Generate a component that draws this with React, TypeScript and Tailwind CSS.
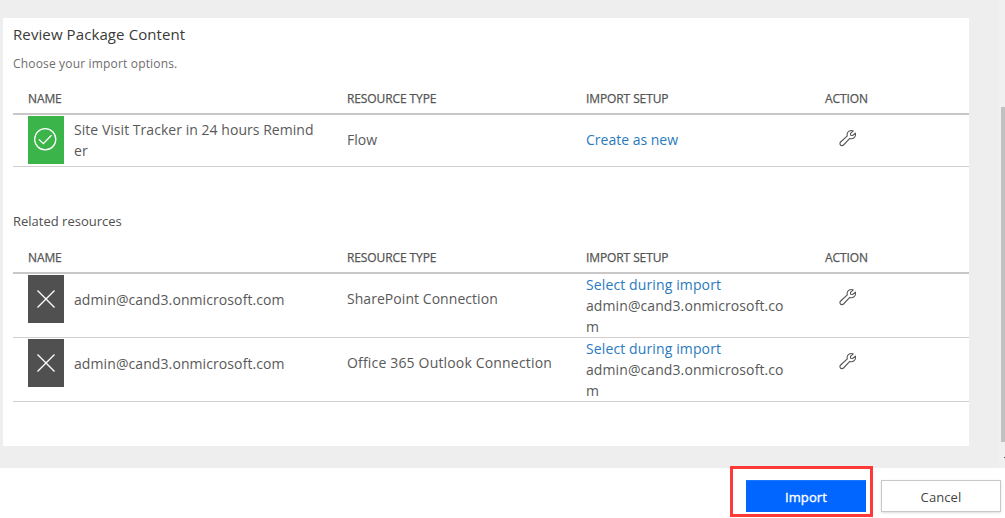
import type { ReactNode } from "react";

function Wrench() {
  return (
    <svg width="18" height="18" viewBox="0 0 18 18" fill="none" stroke="#555" strokeWidth="1.1" strokeLinejoin="round" strokeLinecap="round">
      <path d="M14.3 1.9 C11.5 .6 8.4 2.4 8.1 5 Q8 6 8.3 6.9 L1.6 13 C.3 14.3 1 16.5 2.7 16.6 Q3.8 16.7 4.5 16 L10.8 9.4 C13.7 10.5 17.3 8.2 16.5 4.1 L13.6 6.5 L11.6 6.2 L11.5 4.4 Z" />
    </svg>
  );
}

function CheckTile() {
  return (
    <div className="flex h-12 w-9 shrink-0 items-center justify-center bg-[#3bb44a]">
      <svg width="24" height="24" viewBox="0 0 24 24" fill="none" stroke="#fff" strokeWidth="1.3">
        <circle cx="11.2" cy="11.2" r="10.6" />
        <path d="M4.9 11.4 L9.3 15.6 L17.5 7.2" />
      </svg>
    </div>
  );
}

function CrossTile() {
  return (
    <div className="flex h-12 w-9 shrink-0 items-center justify-center bg-[#505050]">
      <svg width="18" height="18" viewBox="0 0 18 18" fill="none" stroke="#fff" strokeWidth="1.3">
        <path d="M0.5 0.5 L17.5 17.5 M17.5 0.5 L0.5 17.5" />
      </svg>
    </div>
  );
}

const columns = "grid grid-cols-[334px_239px_239px_144px]";

function TableHead() {
  return (
    <div className={`${columns} h-[31px] border-b-2 border-[#c8c8c8] text-xs leading-[29px] tracking-[-0.1px] text-[#555] [-webkit-text-stroke:0.25px_#555]`}>
      <div className="pl-[15px]">NAME</div>
      <div>RESOURCE TYPE</div>
      <div>IMPORT SETUP</div>
      <div>ACTION</div>
    </div>
  );
}

function ConnectionRow({ type }: { type: ReactNode }) {
  return (
    <div className={`${columns} h-16 border-b border-[#d0d0d0] leading-[21px]`}>
      <div className="flex pt-px pl-[15px]">
        <CrossTile />
        <span className="pt-[14px] pl-[10px] tracking-[0.09px]">admin@cand3.onmicrosoft.com</span>
      </div>
      <div className="pt-[14px]">{type}</div>
      <div>
        <div className="tracking-[0.12px] text-[#2a7ac0]">Select during import</div>
        <div className="tracking-[0.09px]">admin@cand3.onmicrosoft.co</div>
        <div>m</div>
      </div>
      <div className="pt-[14px] pl-[14px]"><Wrench /></div>
    </div>
  );
}

export default function App() {
  return (
    <div className="h-[518px] w-[1005px] overflow-hidden bg-white font-['Open_Sans','Noto_Sans',sans-serif] text-sm whitespace-nowrap text-[#595959]">
      <div className="flex h-[468px] justify-between bg-[#eeeeee] pl-[3px]">
        <div className="mt-[18px] h-[428px] w-[966px] bg-white pl-[10px]">
          <h1 className="h-[34px] pt-[5px] text-[15px] leading-[22px] tracking-[0.1px] text-[#3a3a3a]">Review Package Content</h1>
          <p className="h-[32px] pt-[2px] text-xs leading-[20px] tracking-[0.17px] text-[#6e6e6e]">Choose your import options.</p>
          <TableHead />
          <div className={`${columns} h-[52px] border-b border-[#d0d0d0] leading-[21px]`}>
            <div className="flex pt-px pl-[15px]">
              <CheckTile />
              <div className="pt-[3px] pl-[10px] tracking-[0.04px]">
                <div>Site Visit Tracker in 24 hours Remind</div>
                <div>er</div>
              </div>
            </div>
            <div className="pt-[14px]">Flow</div>
            <div className="pt-[14px] text-[#2a7ac0]">Create as new</div>
            <div className="pt-[14px] pl-[14px]"><Wrench /></div>
          </div>
          <h2 className="h-[76px] pt-[44px] text-[13px] leading-[20px] text-[#505050]">Related resources</h2>
          <TableHead />
          <ConnectionRow type={<span className="tracking-[0.05px]">SharePoint Connection</span>} />
          <ConnectionRow type={<span className="tracking-[0.17px]">Office 365 Outlook Connection</span>} />
        </div>
        <div className="flex w-[6px] flex-col items-end bg-[#f0f0f0] pt-[107px]">
          <div className="h-[335px] w-1 bg-[#c1c1c1]" />
          <div className="mt-[15px] h-px w-px bg-[#555]" />
        </div>
      </div>
      <div className="relative flex h-[50px] justify-end gap-[15px] pt-3 pr-1 text-[13px]">
        <button className="h-8 w-[120px] border border-[#0066ff] border-t-[#1a75ff] bg-[#0066ff] pt-[2px] tracking-[0.1px] text-white [-webkit-text-stroke:0.35px_#fff]">Import</button>
        <button className="h-8 w-[120px] border border-[#c8c8c8] bg-white pt-[2px] tracking-[0.1px] text-[#444] shadow-sm">Cancel</button>
        <div className="absolute -top-[2px] left-[730px] h-[51px] w-[143px] border-3 border-[#ff3838]" />
      </div>
    </div>
  );
}
